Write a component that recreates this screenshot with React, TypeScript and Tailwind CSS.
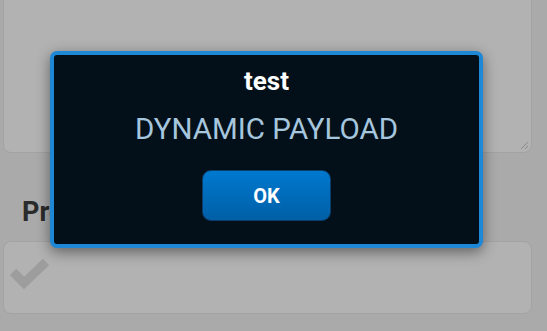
export default function App() {
    return <div className="relative w-[547px] h-[331px] overflow-hidden bg-[#aaaaaa] font-['Roboto',sans-serif]">

        {/* page underneath the overlay */}
        <div className="pl-[3px] pr-[15px]">
            <div className="relative h-[153px] bg-[#b2b2b2] border-x border-b border-[#a3a3a3] rounded-b-lg">
                <svg className="absolute right-[2px] bottom-[2px]" width="9" height="9" viewBox="0 0 9 9">
                    <path d="M1 8 L8 1 M5 8 L8 5" stroke="#8a8a8a" strokeWidth="1" />
                </svg>
            </div>
            <div className="pl-[19px] pt-[44px] h-[88px] text-[27px] leading-[30px] font-bold text-[#2b2b2b]">Preview</div>
            <div className="h-[73px] bg-[#b2b2b2] border border-[#a3a3a3] rounded-lg">
                <svg width="50" height="50" viewBox="0 0 50 50" className="ml-[1px] mt-[13px]">
                    <polyline points="8,17 19,28 41,7" fill="none" stroke="#9d9d9d" strokeWidth="9" strokeLinejoin="miter" />
                </svg>
            </div>
        </div>

        {/* dialog */}
        <div className="absolute left-[50px] top-[51px] w-[433px] h-[197px] border-4 border-[#1e88d6] rounded-[7px] bg-[#03101a] shadow-[0_4px_14px_rgba(0,0,0,0.45)] flex flex-col items-center pt-[11px]">
            <div className="text-[26px] leading-[30px] font-bold text-white">test</div>
            <div className="mt-[16px] text-[29.5px] leading-[34px] text-[#a6c6de]">DYNAMIC PAYLOAD</div>
            <button className="mt-[24px] w-[129px] h-[51px] rounded-[9px] border border-[#0b3c6a] bg-gradient-to-b from-[#0079cf] to-[#005fa6] text-white text-[20px] font-bold">OK</button>
        </div>
    </div>
}
